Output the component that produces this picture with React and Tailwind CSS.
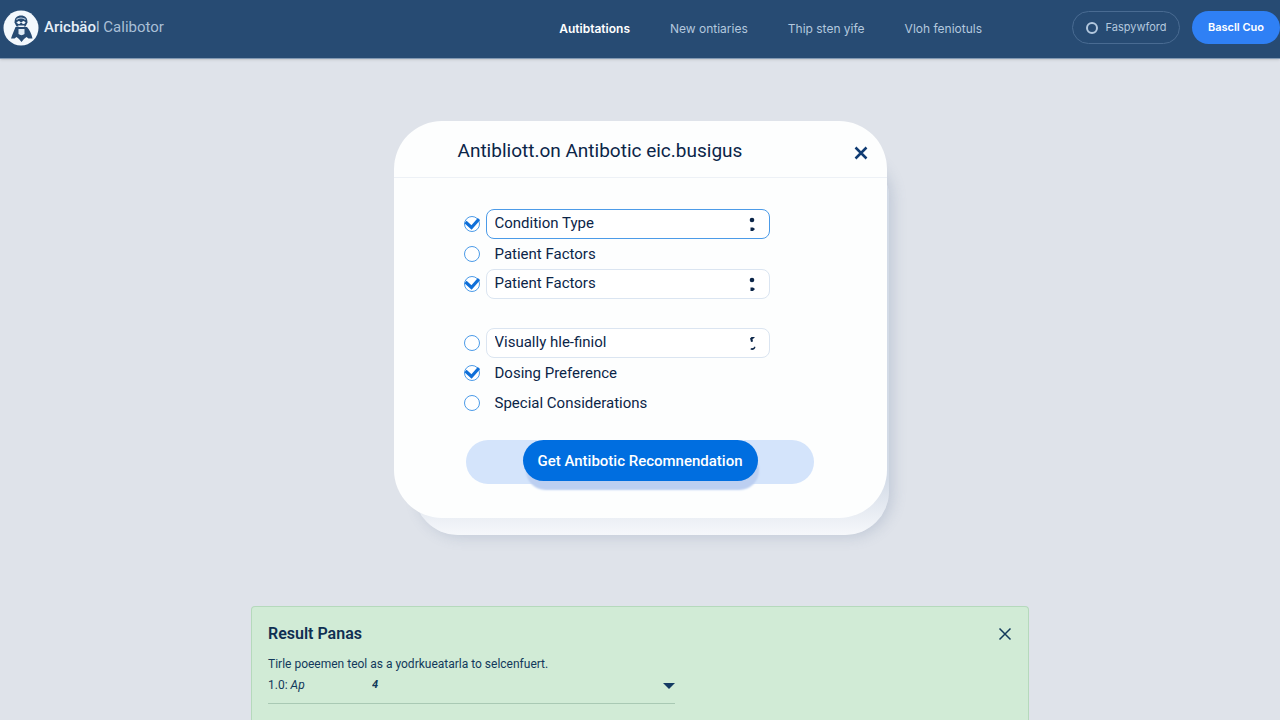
import { useState } from "react";

const navItems = ["Autibtations", "New ontiaries", "Thip sten yife", "Vloh feniotuls"];

const initialRows = [
  { id: "condition", label: "Condition Type", checked: true, type: "select", active: true, marker: "dots" },
  { id: "patient", label: "Patient Factors", checked: false, type: "text" },
  { id: "patient-select", label: "Patient Factors", checked: true, type: "select", marker: "dots" },
  { id: "visually", label: "Visually hle-finiol", checked: false, type: "select", spaced: true, marker: "hooks" },
  { id: "dosing", label: "Dosing Preference", checked: true, type: "text" },
  { id: "special", label: "Special Considerations", checked: false, type: "text" },
];

function Logo() {
  return (
    <svg viewBox="0 0 36 36" className="size-9 shrink-0" aria-hidden="true">
      <circle cx="18" cy="18" r="17.5" fill="#f3f8fd" />
      <path d="M11.5 12.5c0-4.500 2.500-7 6.500-7s6.500 2.500 6.500 7l-2 4h-9z" fill="#284b73" />
      <path d="M13.500 9.500c2.500-2 6.500-2 9 0" stroke="#c9d9ea" strokeWidth="1.2" fill="none" />
      <path d="M13.500 12.500h9" stroke="#9fb6cf" strokeWidth="1" />
      <circle cx="15.800" cy="12.500" r="1.600" fill="#f3f8fd" />
      <circle cx="20.500" cy="12.500" r="1.600" fill="#f3f8fd" />
      <path d="M15 15.500h6.500l-1 2h-4.500z" fill="#f3f8fd" />
      <path d="M12.500 17c-1.500 3.500-3 7-4.500 11.500h3.500l2-1.500 2.500 2 2.500 3 2.500-3 2.500-2 2 1.500h4c-1-5-3-8.500-5.500-11.500z" fill="#284b73" />
      <path d="M15.500 19h6v5c-1.500 1.500-4.500 1.500-6 0z" fill="#dfeaf5" />
    </svg>
  );
}

function CloseIcon({ className, strokeWidth }) {
  return (
    <svg viewBox="0 0 14 14" className={className} fill="none" stroke="currentColor" strokeWidth={strokeWidth} aria-hidden="true">
      <path d="M1.5 1.5l11 11M12.5 1.5l-11 11" />
    </svg>
  );
}

function Marker({ type }) {
  return (
    <svg viewBox="0 0 8 18" className="pointer-events-none absolute right-3.5 top-1/2 h-[18px] w-2 -translate-y-1/2 text-[#0b2548]" fill="currentColor" aria-hidden="true">
      {type === "dots" ? (
        <>
          <circle cx="4" cy="5" r="2.3" />
          <path d="M2.5 12.500h2.500l2 1.500-2 2h-2.500z" />
        </>
      ) : (
        <>
          <path d="M2 4.500l1.500-1.500h3.500l-1.500 1.500-1 .5.5 2.500-2 .5-.5-2z" />
          <path d="M3 14c1.500.5 3 0 3.500-1.500l1 .5c-.5 2.500-3 3.500-5 2.500z" />
        </>
      )}
    </svg>
  );
}

function RoundCheckbox({ id, label, checked, onChange }) {
  return (
    <span className="relative size-4 shrink-0">
      <input id={id} type="checkbox" aria-label={label} checked={checked} onChange={onChange} className="peer block size-4 appearance-none rounded-full border border-[#4c9be8] bg-white" />
      <svg viewBox="0 0 16 16" className="pointer-events-none absolute inset-0 hidden size-4 peer-checked:block" fill="none" aria-hidden="true">
        <path d="M1.5 6l6 5.500L15 3" stroke="#0f6fd8" strokeWidth="3.2" />
      </svg>
    </span>
  );
}

function FieldRow({ row, onToggle }) {
  const checkId = `${row.id}-check`;
  return (
    <div className={`flex h-[30px] items-center gap-1.5 ${row.spaced ? "mt-[29px]" : ""}`}>
      <RoundCheckbox id={checkId} label={row.label} checked={row.checked} onChange={() => onToggle(row.id)} />
      {row.type === "select" ? (
        <div className="relative flex-1">
          <select
            aria-label={row.label}
            className={`block h-[30px] w-full appearance-none rounded-lg border bg-white px-2 pb-0.5 text-[#0b2548] outline-none ${row.active ? "border-[#4c9be8]" : "border-[#dbe5f1]"}`}
          >
            <option>{row.label}</option>
          </select>
          <Marker type={row.marker} />
        </div>
      ) : (
        <label htmlFor={checkId} className="pl-[9px] text-[#0b2548]">
          {row.label}
        </label>
      )}
    </div>
  );
}

function Header() {
  return (
    <header className="flex h-[59px] items-center border-b border-[#8299b3] bg-[#274b73] pb-[3px] pl-[3px] shadow-sm">
      <a href="#home" className="flex items-center gap-[5px] text-[15px] text-[#a9bfd6]">
        <Logo />
        <span>
          <span className="font-medium text-[#e6eff8]">Aricbäo</span>l Calibotor
        </span>
      </a>
      <nav className="ml-auto mr-[90px] flex gap-10 pt-0.5 font-['Inter',sans-serif] text-xs text-[#b3c8de]">
        {navItems.map((item, index) => (
          <a key={item} href="#section" className={index === 0 ? "font-semibold text-white" : ""}>
            {item}
          </a>
        ))}
      </nav>
      <div className="flex gap-3 font-['Inter',sans-serif] text-[11px]">
        <button className="flex h-[33px] w-[108px] items-center justify-center gap-2 rounded-full border border-[#496b92] text-[#b3c8de]">
          <span className="size-3 rounded-full border-2 border-[#b3c8de]" />
          Faspywford
        </button>
        <button className="h-[33px] w-[88px] rounded-full bg-[#2f80f5] font-semibold text-white">Bascll Cuo</button>
      </div>
    </header>
  );
}

function RecommendationCard() {
  const [rows, setRows] = useState(initialRows);

  function toggleRow(id) {
    setRows((current) => current.map((row) => (row.id === id ? { ...row, checked: !row.checked } : row)));
  }

  return (
    <section className="relative mx-auto mt-[62px] w-full max-w-[493px]">
      <div className="absolute -bottom-[17px] -right-0.5 left-5 top-8 rounded-[44px] bg-linear-to-b from-[#d3dbe7] from-85% to-[#f6f8fb] shadow-[4px_2px_14px_rgba(90,115,150,0.22)]" />
      <form className="relative rounded-[48px] bg-[#fdfefe] pb-[34px]" onSubmit={(event) => event.preventDefault()}>
        <div className="flex h-[57px] items-center justify-between border-b border-[#edf1f6] pl-16 pr-[19px] pt-1">
          <h1 className="text-[19px] text-[#0b2548]">Antibliott.on Antibotic eic.busigus</h1>
          <button type="button" aria-label="Close form" className="pt-1 text-[#103c73]">
            <CloseIcon className="size-3.5" strokeWidth="2.5" />
          </button>
        </div>
        <div className="mt-[31px] w-[376px] max-w-full pl-[70px] text-[15px]">
          {rows.map((row) => (
            <FieldRow key={row.id} row={row} onToggle={toggleRow} />
          ))}
        </div>
        <div className="mx-auto mt-[22px] flex h-11 max-w-[348px] items-start justify-center rounded-full bg-[#d4e4fb]">
          <button type="submit" className="h-[41px] w-[235px] rounded-full bg-[#006ee0] pt-0.5 text-[15px] font-medium text-white shadow-[2px_10px_2px_-1px_#bccff1]">
            Get Antibotic Recomnendation
          </button>
        </div>
      </form>
    </section>
  );
}

function ResultPanel() {
  return (
    <section className="mx-auto mt-[88px] w-full max-w-[778px] flex-1 rounded-t border border-b-0 border-[#b5d9bc] bg-[#d1ebd6] px-4 pt-[15px] text-[#12395b]">
      <div className="flex h-6 items-center justify-between">
        <h2 className="text-base font-semibold text-[#0f2f52]">Result Panas</h2>
        <button aria-label="Close results" className="text-[#12395b]">
          <CloseIcon className="size-3.5" strokeWidth="1.5" />
        </button>
      </div>
      <p className="mt-2 text-xs leading-5">Tirle poeemen teol as a yodrkueatarla to selcenfuert.</p>
      <div className="mt-px flex h-[29px] max-w-[407px] items-start border-b border-[#a9c9b4] text-xs leading-5">
        <label htmlFor="result-value" className="w-[104px]">
          1.0: <i>Ap</i>
        </label>
        <div className="relative flex-1">
          <select id="result-value" className="block h-5 w-full appearance-none text-[11px] font-bold italic outline-none">
            <option>4</option>
          </select>
          <svg viewBox="0 0 12 6" className="pointer-events-none absolute right-0 top-2 h-1.5 w-3" fill="#143a63" aria-hidden="true">
            <path d="M0 0h12L6 6z" />
          </svg>
        </div>
      </div>
    </section>
  );
}

export default function App() {
  return (
    <div className="flex min-h-screen flex-col bg-[#dfe3ea] font-['Roboto',sans-serif]">
      <Header />
      <main className="flex flex-1 flex-col">
        <RecommendationCard />
        <ResultPanel />
      </main>
    </div>
  );
}
